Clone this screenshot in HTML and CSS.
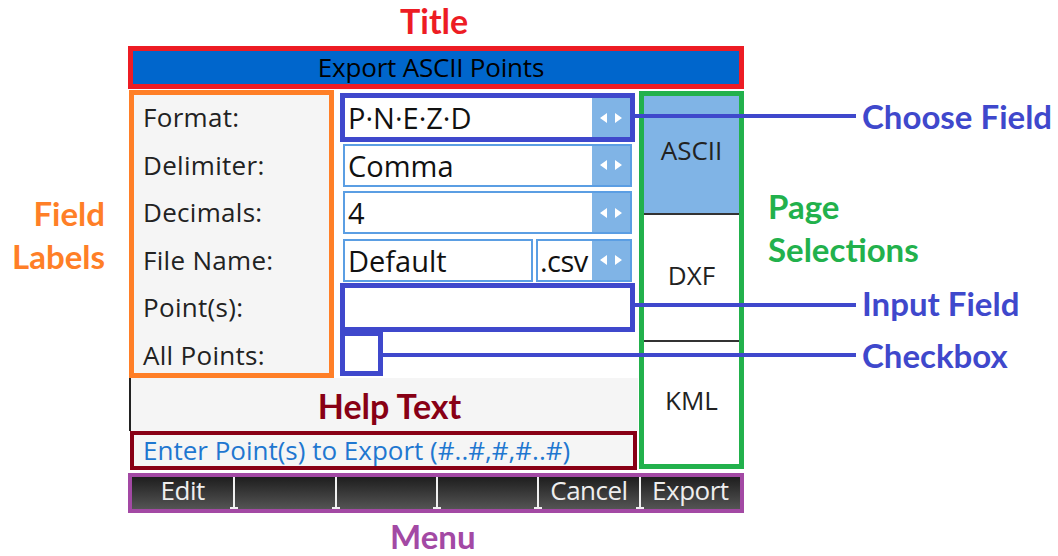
FILE: index.html
```html
<!DOCTYPE html>
<html lang="en">
<head>
  <meta charset="UTF-8">
  <title>Export ASCII Points</title>
  <link rel="stylesheet" href="styles.css">
</head>
<body>
  <div class="stage">

    <!-- Tela da calculadora -->
    <div class="screen">
      <div class="title-bar">Export ASCII Points</div>

      <div class="screen-body">
        <div class="left-col">
          <div class="form">
            <div class="labels">
              <div class="label">Format:</div>
              <div class="label">Delimiter:</div>
              <div class="label">Decimals:</div>
              <div class="label">File Name:</div>
              <div class="label">Point(s):</div>
              <div class="label">All Points:</div>
            </div>
            <div class="fields">
              <div class="field hl">
                <span class="value">P·N·E·Z·D</span>
                <span class="chooser"><svg width="22" height="10" viewBox="0 0 22 10"><path d="M0 5 L7 0 V10 Z M22 5 L15 0 V10 Z" fill="#fff"/></svg></span>
              </div>
              <div class="field">
                <span class="value">Comma</span>
                <span class="chooser"><svg width="22" height="10" viewBox="0 0 22 10"><path d="M0 5 L7 0 V10 Z M22 5 L15 0 V10 Z" fill="#fff"/></svg></span>
              </div>
              <div class="field">
                <span class="value">4</span>
                <span class="chooser"><svg width="22" height="10" viewBox="0 0 22 10"><path d="M0 5 L7 0 V10 Z M22 5 L15 0 V10 Z" fill="#fff"/></svg></span>
              </div>
              <div class="field-pair">
                <div class="field name">
                  <span class="value">Default</span>
                </div>
                <div class="field ext">
                  <span class="value">.csv</span>
                  <span class="chooser"><svg width="22" height="10" viewBox="0 0 22 10"><path d="M0 5 L7 0 V10 Z M22 5 L15 0 V10 Z" fill="#fff"/></svg></span>
                </div>
              </div>
              <div class="field hl"></div>
              <div class="checkbox"></div>
            </div>
          </div>

          <div class="help-label">Help Text</div>
          <div class="help-box">Enter Point(s) to Export (#..#,#,#..#)</div>
        </div>

        <div class="pages">
          <div class="tab active">ASCII</div>
          <div class="tab">DXF</div>
          <div class="tab last">KML</div>
        </div>
      </div>

      <div class="menu">
        <div class="menu-btn">Edit</div>
        <div class="menu-btn"></div>
        <div class="menu-btn"></div>
        <div class="menu-btn"></div>
        <div class="menu-btn">Cancel</div>
        <div class="menu-btn">Export</div>
      </div>
    </div>

    <!-- Anotações -->
    <div class="note note-title">Title</div>
    <div class="note note-labels">Field<br>Labels</div>
    <div class="note note-choose">Choose Field</div>
    <div class="note note-pages">Page<br>Selections</div>
    <div class="note note-input">Input Field</div>
    <div class="note note-check">Checkbox</div>
    <div class="note note-menu">Menu</div>

    <div class="wire wire-choose"></div>
    <div class="wire wire-input"></div>
    <div class="wire wire-check"></div>
  </div>
</body>
</html>
```

FILE: styles.css
```css
/* Corpo */
body {
  margin: 0;
  background: #fff;
  font-family: 'Open Sans', 'Noto Sans', sans-serif;
  color: #1a1a1a;
}

.stage {
  position: relative;
  width: 1058px;
  height: 556px;
  padding-top: 46px;
  box-sizing: border-box;
  overflow: hidden;
}

/* Tela */
.screen {
  width: 616px;
  margin-left: 128px;
}

.title-bar {
  height: 43px;
  box-sizing: border-box;
  border: 5px solid #ed1c24;
  background: #0066cc;
  color: #000;
  font-size: 26px;
  line-height: 32px;
  text-align: center;
  padding-right: 10px;
  letter-spacing: -0.2px;
}

.screen-body {
  display: flex;
  height: 383px;
}

.left-col {
  width: 510px;
  display: flex;
  flex-direction: column;
}

.form {
  display: flex;
  margin-top: 1px;
  height: 288px;
}

/* Rótulos */
.labels {
  width: 205px;
  margin-left: 1px;
  box-sizing: border-box;
  border: 5px solid #ff7f27;
  background: #f5f5f5;
  padding-top: 1px;
  display: flex;
  flex-direction: column;
  gap: 4.5px;
}

.label {
  height: 43px;
  line-height: 43px;
  font-size: 26px;
  padding-left: 9px;
  color: #222;
  letter-spacing: 0.3px;
}

/* Campos */
.fields {
  width: 289px;
  margin-left: 9px;
  padding-top: 6px;
  display: flex;
  flex-direction: column;
  gap: 4.5px;
}

.field {
  height: 43px;
  box-sizing: border-box;
  border: 2px solid #5b9ee3;
  background: #fff;
  display: flex;
  align-items: center;
}

.field.hl {
  border-color: #3f48cc;
  box-shadow: 0 0 0 3px #3f48cc;
}

.value {
  flex: 1;
  font-size: 29px;
  line-height: 39px;
  padding-left: 3px;
  color: #111;
}

.chooser {
  width: 38px;
  align-self: stretch;
  background: #80b4e6;
  display: flex;
  align-items: center;
  justify-content: center;
}

.field-pair {
  display: flex;
  gap: 3px;
}

.field.name {
  width: 190px;
}

.field.ext {
  flex: 1;
}

.field.ext .value {
  padding-left: 2px;
  letter-spacing: -0.5px;
}

.checkbox {
  width: 37px;
  height: 39px;
  box-sizing: border-box;
  border: 2px solid #3f48cc;
  box-shadow: 0 0 0 3px #3f48cc;
  background: #fff;
}

/* Ajuda */
.help-label {
  height: 53px;
  margin-left: 1px;
  border-left: 2px solid #222;
  background: #f5f5f5;
  text-align: center;
  font-family: 'Lato', sans-serif;
  font-weight: bold;
  font-size: 34px;
  line-height: 56px;
  color: #880015;
  padding-left: 10px;
}

.help-box {
  width: 507px;
  height: 39px;
  margin-left: 2px;
  box-sizing: border-box;
  border: 4px solid #880015;
  background: #f5f5f5;
  color: #1f77d0;
  font-size: 26px;
  line-height: 30px;
  padding-left: 9px;
  white-space: nowrap;
}

/* Páginas */
.pages {
  width: 105px;
  height: 378px;
  margin: 2px 0 0 1px;
  box-sizing: border-box;
  border: 5px solid #22b14c;
  background: #fff;
  display: flex;
  flex-direction: column;
}

.tab {
  height: 119px;
  border-bottom: 2px solid #333;
  display: flex;
  align-items: center;
  justify-content: center;
  font-size: 26px;
  color: #222;
  padding-bottom: 6px;
  box-sizing: border-box;
}

.tab.active {
  background: #80b4e6;
  padding-bottom: 10px;
}

.tab + .tab {
  height: 127px;
}

.tab.last {
  flex: 1;
  border-bottom: none;
  padding-bottom: 6px;
}

/* Menu */
.menu {
  height: 40px;
  margin-top: 1px;
  box-sizing: border-box;
  border: 4px solid #a349a4;
  display: grid;
  grid-template-columns: repeat(6, 1fr);
  background: #222;
}

.menu-btn {
  position: relative;
  background: linear-gradient(#1e1e1e, #545454);
  color: #eee;
  font-size: 26px;
  line-height: 26px;
  text-align: center;
  letter-spacing: -0.5px;
}

.menu-btn + .menu-btn {
  border-left: 2px solid #f0f0f0;
}

.menu-btn + .menu-btn::after {
  content: "";
  position: absolute;
  left: -5px;
  bottom: 0;
  width: 8px;
  height: 2px;
  background: #f0f0f0;
}

/* Anotações */
.note {
  position: absolute;
  font-family: 'Lato', 'Noto Sans', sans-serif;
  font-weight: bold;
  font-size: 33px;
  line-height: 43px;
  color: #3f48cc;
  white-space: nowrap;
}

.note-title {
  left: 400px;
  top: -1px;
  font-size: 34px;
  color: #ed1c24;
}

.note-labels {
  left: 3px;
  top: 192px;
  width: 102px;
  text-align: right;
  color: #ff7f27;
}

.note-choose {
  left: 862px;
  top: 95px;
}

.note-pages {
  left: 768px;
  top: 185px;
  color: #22b14c;
}

.note-input {
  left: 862px;
  top: 282px;
}

.note-check {
  left: 862px;
  top: 334px;
}

.note-menu {
  left: 390px;
  top: 518px;
  line-height: 36px;
  color: #a349a4;
}

.wire {
  position: absolute;
  height: 4px;
  background: #3f48cc;
}

.wire-choose {
  left: 634px;
  width: 222px;
  top: 114px;
}

.wire-input {
  left: 634px;
  width: 222px;
  top: 303px;
}

.wire-check {
  left: 382px;
  width: 474px;
  top: 353px;
}
```
